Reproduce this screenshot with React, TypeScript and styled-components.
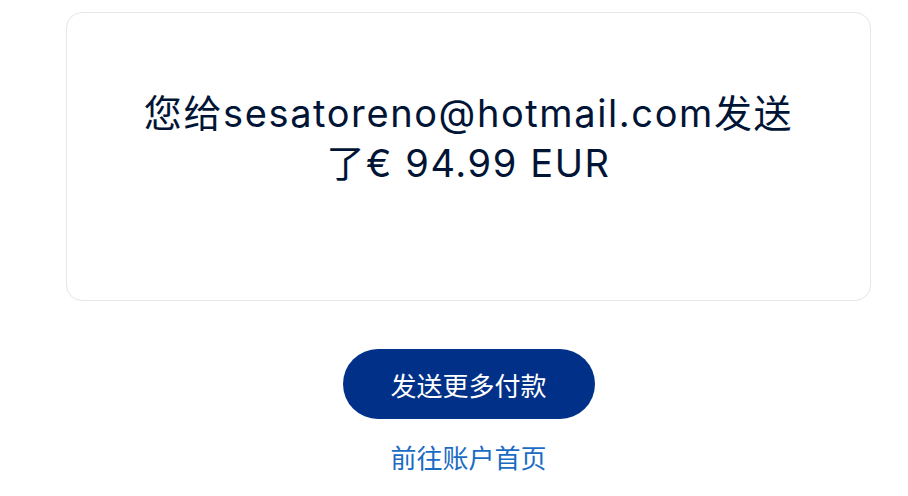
import React from "react";
import styled, { createGlobalStyle } from "styled-components";

const Global = createGlobalStyle`
  html, body { margin: 0; padding: 0; background: #ffffff; }
  body { font-family: Inter, "Noto Sans CJK SC", sans-serif; }
`;

const Page = styled.div`
  width: 908px;
  height: 496px;
  overflow: hidden;
  display: flex;
  flex-direction: column;
  align-items: center;
  padding: 12px 0 0 29px;
  box-sizing: border-box;
`;

const Card = styled.div`
  width: 805px;
  height: 289px;
  box-sizing: border-box;
  border: 1px solid #e6e6e6;
  border-radius: 16px;
  display: flex;
  align-items: center;
  justify-content: center;
  padding: 0 40px 38px;
`;

const Message = styled.h1`
  margin: 0;
  font-family: Inter, "Noto Sans CJK SC", sans-serif;
  font-weight: 400;
  font-size: 38px;
  line-height: 50px;
  color: #001435;
  text-align: center;
  max-width: 680px;
  letter-spacing: 1.6px;
`;

const Actions = styled.div`
  display: flex;
  flex-direction: column;
  align-items: center;
  margin-top: 48px;
  gap: 20px;
`;

const PrimaryButton = styled.button`
  width: 252px;
  height: 70px;
  border: none;
  border-radius: 35px;
  background: #003087;
  color: #ffffff;
  font-family: "Noto Sans CJK SC", sans-serif;
  font-size: 26px;
  cursor: pointer;
`;

const TextLink = styled.a`
  font-family: "Noto Sans CJK SC", sans-serif;
  font-size: 26px;
  color: #1a6bc4;
  text-decoration: none;
  line-height: 36px;
`;

export default function App() {
  return (
    <>
      <Global />
      <Page>
        <Card>
          <Message>您给sesatoreno@hotmail.com发送了€ 94.99 EUR</Message>
        </Card>
        <Actions>
          <PrimaryButton>发送更多付款</PrimaryButton>
          <TextLink href="#">前往账户首页</TextLink>
        </Actions>
      </Page>
    </>
  );
}
